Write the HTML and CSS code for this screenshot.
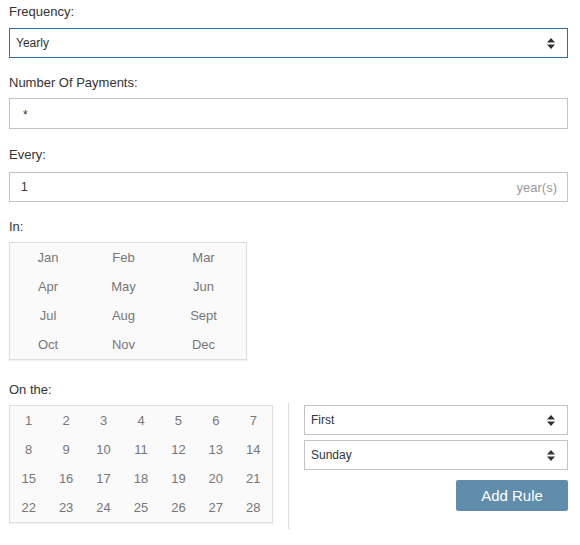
FILE: index.html
```html
<!DOCTYPE html>
<html>
<head>
<meta charset="utf-8">
<link rel="stylesheet" href="styles.css">
</head>
<body>
<div class="form">
  <div class="field f-freq">
    <div class="label">Frequency:</div>
    <div class="select focused"><span>Yearly</span><svg class="arrow" width="8" height="11" viewBox="0 0 8 11"><path d="M4 0 L8 4.5 L0 4.5 Z M0 6.5 L8 6.5 L4 11 Z" fill="#333"/></svg></div>
  </div>
  <div class="field f-num">
    <div class="label">Number Of Payments:</div>
    <div class="input"><span class="star">*</span></div>
  </div>
  <div class="field f-every">
    <div class="label">Every:</div>
    <div class="input every"><span>1</span><span class="unit">year(s)</span></div>
  </div>
  <div class="field f-in">
    <div class="label">In:</div>
    <div class="months">
      <span>Jan</span><span>Feb</span><span>Mar</span>
      <span>Apr</span><span>May</span><span>Jun</span>
      <span>Jul</span><span>Aug</span><span>Sept</span>
      <span>Oct</span><span>Nov</span><span>Dec</span>
    </div>
  </div>
  <div class="field f-on">
    <div class="label">On the:</div>
    <div class="on-row">
      <div class="days">
        <span>1</span><span>2</span><span>3</span><span>4</span><span>5</span><span>6</span><span>7</span>
        <span>8</span><span>9</span><span>10</span><span>11</span><span>12</span><span>13</span><span>14</span>
        <span>15</span><span>16</span><span>17</span><span>18</span><span>19</span><span>20</span><span>21</span>
        <span>22</span><span>23</span><span>24</span><span>25</span><span>26</span><span>27</span><span>28</span>
      </div>
      <div class="side">
        <div class="select small"><span>First</span><svg class="arrow" width="8" height="11" viewBox="0 0 8 11"><path d="M4 0 L8 4.5 L0 4.5 Z M0 6.5 L8 6.5 L4 11 Z" fill="#333"/></svg></div>
        <div class="select small second"><span>Sunday</span><svg class="arrow" width="8" height="11" viewBox="0 0 8 11"><path d="M4 0 L8 4.5 L0 4.5 Z M0 6.5 L8 6.5 L4 11 Z" fill="#333"/></svg></div>
        <div class="btn-row"><button class="btn">Add Rule</button></div>
      </div>
    </div>
  </div>
</div>
</body>
</html>
```
FILE: styles.css
```css
html, body {
  margin: 0;
  padding: 0;
  background: #fff;
}
body {
  font-family: "Liberation Sans", Arial, sans-serif;
  color: #333;
  font-size: 13px;
}
.form {
  padding: 3px 12px 0 9px;
}
.label {
  font-size: 13px;
  line-height: 18px;
  margin-bottom: 7px;
}
.f-freq { margin-bottom: 16px; }
.f-num { margin-bottom: 17px; }
.f-num .label { margin-bottom: 6px; }
.f-every { margin-bottom: 16px; }
.f-every .label { margin-bottom: 8px; }
.f-in { margin-bottom: 21px; }
.f-in .label, .f-on .label { margin-bottom: 6px; }

.select, .input {
  box-sizing: border-box;
  height: 30px;
  border: 1px solid #c3c3c3;
  display: flex;
  align-items: center;
  padding: 0 12px 0 6px;
  font-size: 12px;
  color: #333;
  background: #fff;
}
.select {
  justify-content: space-between;
}
.select.focused {
  border-color: #2c6ea6;
}
.input {
  height: 31px;
  padding-left: 11px;
}
.input.every {
  height: 30px;
  justify-content: space-between;
  padding-right: 10px;
}
.star {
  font-size: 12px;
  padding-left: 2px;
  padding-top: 2px;
}
.unit {
  color: #9a9a9a;
  font-size: 13px;
}
.arrow {
  display: block;
}

.months {
  box-sizing: border-box;
  width: 238px;
  height: 118px;
  border: 1px solid #ddd;
  background: #fafafa;
  box-shadow: 0 1px 1px rgba(0,0,0,0.05);
  display: grid;
  grid-template-columns: 76px 75px 85px;
  grid-auto-rows: 29px;
  color: #777;
  font-size: 13px;
}
.months span, .days span {
  display: flex;
  align-items: center;
  justify-content: center;
}

.on-row {
  display: flex;
  align-items: flex-start;
  margin-top: -2px;
}
.days {
  box-sizing: border-box;
  width: 264px;
  height: 118px;
  margin-top: 2px;
  border: 1px solid #ddd;
  background: #fafafa;
  box-shadow: 0 1px 1px rgba(0,0,0,0.05);
  display: grid;
  grid-template-columns: repeat(7, 1fr);
  grid-auto-rows: 29px;
  color: #777;
  font-size: 13px;
}
.side {
  flex: 1;
  margin-left: 15px;
  border-left: 1px solid #ddd;
  padding: 2px 0 0 15px;
  height: 126px;
  box-sizing: border-box;
}
.select.small {
  height: 30px;
  padding-left: 6px;
}
.select.second {
  margin-top: 5px;
}
.btn-row {
  display: flex;
  justify-content: flex-end;
  margin-top: 10px;
}
.btn {
  width: 112px;
  height: 31px;
  border: none;
  border-radius: 2px;
  background: #618dac;
  color: #fff;
  font-family: "Liberation Sans", Arial, sans-serif;
  font-size: 15px;
  padding: 0;
}
```
